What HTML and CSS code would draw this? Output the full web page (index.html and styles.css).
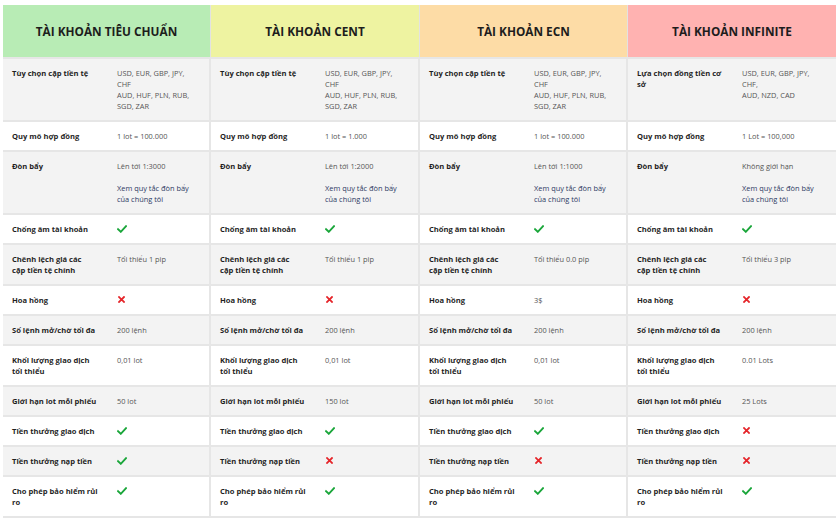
FILE: index.html
```html
<!DOCTYPE html>
<html lang="vi">
<head>
<meta charset="utf-8">
<title>So sánh tài khoản</title>
<link rel="stylesheet" href="styles.css">
</head>
<body>
<div class="compare">
  <div class="head head-green">TÀI KHOẢN TIÊU CHUẨN</div>
  <div class="head head-yellow">TÀI KHOẢN CENT</div>
  <div class="head head-orange">TÀI KHOẢN ECN</div>
  <div class="head head-pink">TÀI KHOẢN INFINITE</div>

  <div class="cell grey"><div class="label">Tùy chọn cặp tiền tệ</div><div class="value">USD, EUR, GBP, JPY,<br>CHF<br>AUD, HUF, PLN, RUB,<br>SGD, ZAR</div></div>
  <div class="cell grey"><div class="label">Tùy chọn cặp tiền tệ</div><div class="value">USD, EUR, GBP, JPY,<br>CHF<br>AUD, HUF, PLN, RUB,<br>SGD, ZAR</div></div>
  <div class="cell grey"><div class="label">Tùy chọn cặp tiền tệ</div><div class="value">USD, EUR, GBP, JPY,<br>CHF<br>AUD, HUF, PLN, RUB,<br>SGD, ZAR</div></div>
  <div class="cell grey last"><div class="label">Lựa chọn đồng tiền cơ<br>sở</div><div class="value">USD, EUR, GBP, JPY,<br>CHF,<br>AUD, NZD, CAD</div></div>

  <div class="cell"><div class="label">Quy mô hợp đồng</div><div class="value">1 lot = 100.000</div></div>
  <div class="cell"><div class="label">Quy mô hợp đồng</div><div class="value">1 lot = 1.000</div></div>
  <div class="cell"><div class="label">Quy mô hợp đồng</div><div class="value">1 lot = 100.000</div></div>
  <div class="cell last"><div class="label">Quy mô hợp đồng</div><div class="value">1 Lot = 100,000</div></div>

  <div class="cell grey"><div class="label">Đòn bẩy</div><div class="value"><p class="para">Lên tới 1:3000</p><a class="link" href="#">Xem quy tắc đòn bẩy<br>của chúng tôi</a></div></div>
  <div class="cell grey"><div class="label">Đòn bẩy</div><div class="value"><p class="para">Lên tới 1:2000</p><a class="link" href="#">Xem quy tắc đòn bẩy<br>của chúng tôi</a></div></div>
  <div class="cell grey"><div class="label">Đòn bẩy</div><div class="value"><p class="para">Lên tới 1:1000</p><a class="link" href="#">Xem quy tắc đòn bẩy<br>của chúng tôi</a></div></div>
  <div class="cell grey last"><div class="label">Đòn bẩy</div><div class="value"><p class="para">Không giới hạn</p><a class="link" href="#">Xem quy tắc đòn bẩy<br>của chúng tôi</a></div></div>

  <div class="cell"><div class="label">Chống âm tài khoản</div><div class="value"><svg class="ico yes" viewBox="0 0 10 8"><path d="M1 4.2 L3.8 6.8 L9 1.2"/></svg></div></div>
  <div class="cell"><div class="label">Chống âm tài khoản</div><div class="value"><svg class="ico yes" viewBox="0 0 10 8"><path d="M1 4.2 L3.8 6.8 L9 1.2"/></svg></div></div>
  <div class="cell"><div class="label">Chống âm tài khoản</div><div class="value"><svg class="ico yes" viewBox="0 0 10 8"><path d="M1 4.2 L3.8 6.8 L9 1.2"/></svg></div></div>
  <div class="cell last"><div class="label">Chống âm tài khoản</div><div class="value"><svg class="ico yes" viewBox="0 0 10 8"><path d="M1 4.2 L3.8 6.8 L9 1.2"/></svg></div></div>

  <div class="cell grey"><div class="label">Chênh lệch giá các<br>cặp tiền tệ chính</div><div class="value">Tối thiểu 1 pip</div></div>
  <div class="cell grey"><div class="label">Chênh lệch giá các<br>cặp tiền tệ chính</div><div class="value">Tối thiểu 1 pip</div></div>
  <div class="cell grey"><div class="label">Chênh lệch giá các<br>cặp tiền tệ chính</div><div class="value">Tối thiểu 0.0 pip</div></div>
  <div class="cell grey last"><div class="label">Chênh lệch giá các<br>cặp tiền tệ chính</div><div class="value">Tối thiểu 3 pip</div></div>

  <div class="cell"><div class="label">Hoa hồng</div><div class="value"><svg class="ico no" viewBox="0 0 8 8"><path d="M1.2 1.2 L6.8 6.8 M6.8 1.2 L1.2 6.8"/></svg></div></div>
  <div class="cell"><div class="label">Hoa hồng</div><div class="value"><svg class="ico no" viewBox="0 0 8 8"><path d="M1.2 1.2 L6.8 6.8 M6.8 1.2 L1.2 6.8"/></svg></div></div>
  <div class="cell"><div class="label">Hoa hồng</div><div class="value">3$</div></div>
  <div class="cell last"><div class="label">Hoa hồng</div><div class="value"><svg class="ico no" viewBox="0 0 8 8"><path d="M1.2 1.2 L6.8 6.8 M6.8 1.2 L1.2 6.8"/></svg></div></div>

  <div class="cell grey"><div class="label">Số lệnh mở/chờ tối đa</div><div class="value">200 lệnh</div></div>
  <div class="cell grey"><div class="label">Số lệnh mở/chờ tối đa</div><div class="value">200 lệnh</div></div>
  <div class="cell grey"><div class="label">Số lệnh mở/chờ tối đa</div><div class="value">200 lệnh</div></div>
  <div class="cell grey last"><div class="label">Số lệnh mở/chờ tối đa</div><div class="value">200 lệnh</div></div>

  <div class="cell"><div class="label">Khối lượng giao dịch<br>tối thiểu</div><div class="value">0,01 lot</div></div>
  <div class="cell"><div class="label">Khối lượng giao dịch<br>tối thiểu</div><div class="value">0,01 lot</div></div>
  <div class="cell"><div class="label">Khối lượng giao dịch<br>tối thiểu</div><div class="value">0,01 lot</div></div>
  <div class="cell last"><div class="label">Khối lượng giao dịch<br>tối thiểu</div><div class="value">0.01 Lots</div></div>

  <div class="cell grey"><div class="label">Giới hạn lot mỗi phiếu</div><div class="value">50 lot</div></div>
  <div class="cell grey"><div class="label">Giới hạn lot mỗi phiếu</div><div class="value">150 lot</div></div>
  <div class="cell grey"><div class="label">Giới hạn lot mỗi phiếu</div><div class="value">50 lot</div></div>
  <div class="cell grey last"><div class="label">Giới hạn lot mỗi phiếu</div><div class="value">25 Lots</div></div>

  <div class="cell"><div class="label">Tiền thưởng giao dịch</div><div class="value"><svg class="ico yes" viewBox="0 0 10 8"><path d="M1 4.2 L3.8 6.8 L9 1.2"/></svg></div></div>
  <div class="cell"><div class="label">Tiền thưởng giao dịch</div><div class="value"><svg class="ico yes" viewBox="0 0 10 8"><path d="M1 4.2 L3.8 6.8 L9 1.2"/></svg></div></div>
  <div class="cell"><div class="label">Tiền thưởng giao dịch</div><div class="value"><svg class="ico yes" viewBox="0 0 10 8"><path d="M1 4.2 L3.8 6.8 L9 1.2"/></svg></div></div>
  <div class="cell last"><div class="label">Tiền thưởng giao dịch</div><div class="value"><svg class="ico no" viewBox="0 0 8 8"><path d="M1.2 1.2 L6.8 6.8 M6.8 1.2 L1.2 6.8"/></svg></div></div>

  <div class="cell grey"><div class="label">Tiền thưởng nạp tiền</div><div class="value"><svg class="ico yes" viewBox="0 0 10 8"><path d="M1 4.2 L3.8 6.8 L9 1.2"/></svg></div></div>
  <div class="cell grey"><div class="label">Tiền thưởng nạp tiền</div><div class="value"><svg class="ico no" viewBox="0 0 8 8"><path d="M1.2 1.2 L6.8 6.8 M6.8 1.2 L1.2 6.8"/></svg></div></div>
  <div class="cell grey"><div class="label">Tiền thưởng nạp tiền</div><div class="value"><svg class="ico no" viewBox="0 0 8 8"><path d="M1.2 1.2 L6.8 6.8 M6.8 1.2 L1.2 6.8"/></svg></div></div>
  <div class="cell grey last"><div class="label">Tiền thưởng nạp tiền</div><div class="value"><svg class="ico no" viewBox="0 0 8 8"><path d="M1.2 1.2 L6.8 6.8 M6.8 1.2 L1.2 6.8"/></svg></div></div>

  <div class="cell"><div class="label">Cho phép bảo hiểm rủi<br>ro</div><div class="value"><svg class="ico yes" viewBox="0 0 10 8"><path d="M1 4.2 L3.8 6.8 L9 1.2"/></svg></div></div>
  <div class="cell"><div class="label">Cho phép bảo hiểm rủi<br>ro</div><div class="value"><svg class="ico yes" viewBox="0 0 10 8"><path d="M1 4.2 L3.8 6.8 L9 1.2"/></svg></div></div>
  <div class="cell"><div class="label">Cho phép bảo hiểm rủi<br>ro</div><div class="value"><svg class="ico yes" viewBox="0 0 10 8"><path d="M1 4.2 L3.8 6.8 L9 1.2"/></svg></div></div>
  <div class="cell last"><div class="label">Cho phép bảo hiểm rủi<br>ro</div><div class="value"><svg class="ico yes" viewBox="0 0 10 8"><path d="M1 4.2 L3.8 6.8 L9 1.2"/></svg></div></div>
</div>
</body>
</html>
```
FILE: styles.css
```css
* { box-sizing: border-box; }
html, body { margin: 0; padding: 0; background: #ffffff; }
body {
  padding: 5px 3px 0 3px;
  font-family: "Open Sans", "Liberation Sans", sans-serif;
  color: #222;
}
.compare {
  display: grid;
  grid-template-columns: 208px 209px 208px 208px;
  width: 833px;
  border-bottom: 2px solid #e6e6e6;
}
.head {
  height: 52px;
  display: flex;
  align-items: center;
  justify-content: center;
  font-weight: 700;
  font-size: 11.8px;
  color: #1d1d1d;
  border-right: 1px solid #e2e2e2;
}
.head-green { background: #b8ecb5; }
.head-yellow { background: #eef3a1; }
.head-orange { background: #fddca6; }
.head-pink { background: #ffb2b1; border-right: 0; }

.cell {
  display: grid;
  grid-template-columns: 105px 1fr;
  padding: 9px 9px 8px 9px;
  background: #ffffff;
  border-top: 2px solid #e6e6e6;
  border-right: 2px solid #e6e6e6;
  line-height: 11px;
}
.cell.last { border-right: 0; }
.cell.grey { background: #f3f3f3; }
.label {
  font-weight: 700;
  font-size: 7.6px;
  color: #1f1f1f;
  white-space: nowrap;
}
.value {
  font-size: 7.4px;
  color: #555555;
}
.para { margin: 0 0 11px 0; }
.link {
  color: #2d3a64;
  text-decoration: none;
}
.ico {
  display: block;
  margin-top: 1px;
  fill: none;
  stroke-linecap: square;
}
.ico.yes { width: 10px; height: 8px; stroke: #1aa63a; stroke-width: 1.9; }
.ico.no { width: 7px; height: 7px; stroke: #e5252a; stroke-width: 2.1; margin-left: 1px; }
```
